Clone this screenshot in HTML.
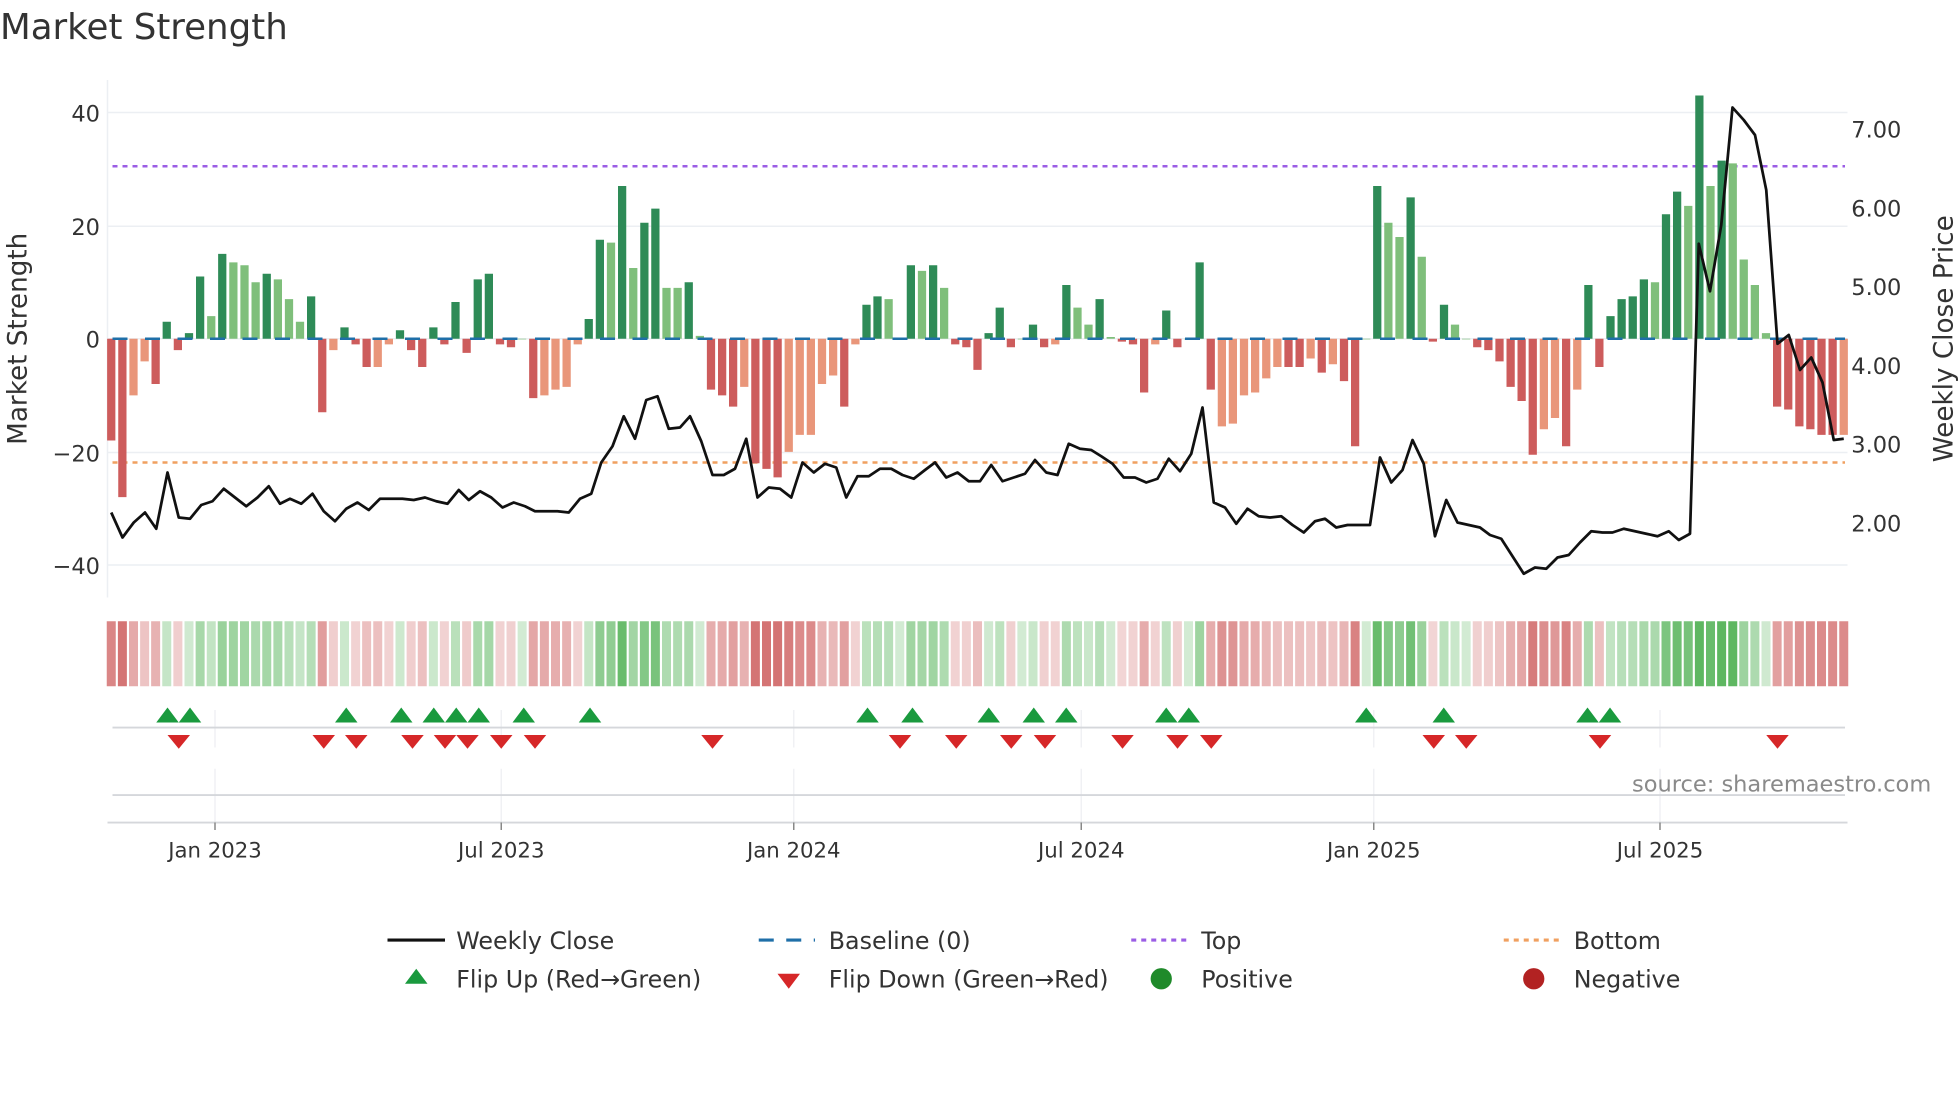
<!DOCTYPE html>
<html><head><meta charset="utf-8"><style>
html,body{margin:0;padding:0;background:#fff;}
svg{display:block;font-family:"DejaVu Sans","Liberation Sans",sans-serif;}
</style></head><body>
<svg id="s" width="1960" height="1102" viewBox="0 0 1568 881.6" xmlns="http://www.w3.org/2000/svg">
<rect width="1568" height="882" fill="#fff"/>
<text x="0" y="31" font-size="28.5" fill="#333">Market Strength</text>
<g stroke="#eceff3" stroke-width="1.2">
<line x1="86" y1="90" x2="1478" y2="90"/><line x1="86" y1="181" x2="1478" y2="181"/>
<line x1="86" y1="271" x2="1478" y2="271"/><line x1="86" y1="362" x2="1478" y2="362"/>
<line x1="86" y1="452" x2="1478" y2="452"/>
<line x1="86" y1="64" x2="86" y2="478"/>
</g>
<g font-size="18" fill="#333" text-anchor="end">
<text x="80" y="97">40</text><text x="80" y="188">20</text><text x="80" y="278">0</text><text x="80" y="369">−20</text><text x="80" y="459">−40</text>
</g>
<g font-size="18" fill="#333">
<text x="1481" y="110">7.00</text><text x="1481" y="173">6.00</text><text x="1481" y="236">5.00</text>
<text x="1481" y="299">4.00</text><text x="1481" y="362">3.00</text><text x="1481" y="425">2.00</text>
</g>
<text transform="translate(21,271) rotate(-90)" font-size="21" fill="#333" text-anchor="middle">Market Strength</text>
<text transform="translate(1562,271) rotate(-90)" font-size="21" fill="#333" text-anchor="middle">Weekly Close Price</text>
<line x1="90" y1="133" x2="1476" y2="133" stroke="#9b5de5" stroke-width="2" stroke-dasharray="4,4"/>
<line x1="90" y1="370" x2="1476" y2="370" stroke="#f0a060" stroke-width="2" stroke-dasharray="4,4"/>
<g id="bars"></g>
<line x1="90" y1="271" x2="1476" y2="271" stroke="#1f6fa8" stroke-width="2" stroke-dasharray="12,14"/>
<polyline id="pl" fill="none" stroke="#111" stroke-width="2.2" stroke-linejoin="round"/>
<g id="heat"></g>
<g stroke="#f0f1f4" stroke-width="1.2">
<line x1="172" y1="568" x2="172" y2="598"/><line x1="401" y1="568" x2="401" y2="598"/><line x1="635" y1="568" x2="635" y2="598"/>
<line x1="865" y1="568" x2="865" y2="598"/><line x1="1099" y1="568" x2="1099" y2="598"/><line x1="1328" y1="568" x2="1328" y2="598"/>
<line x1="172" y1="615" x2="172" y2="658"/><line x1="401" y1="615" x2="401" y2="658"/><line x1="635" y1="615" x2="635" y2="658"/>
<line x1="865" y1="615" x2="865" y2="658"/><line x1="1099" y1="615" x2="1099" y2="658"/><line x1="1328" y1="615" x2="1328" y2="658"/>
</g>
<line x1="90" y1="582" x2="1476" y2="582" stroke="#d5d7db" stroke-width="1.5"/>
<line x1="90" y1="636" x2="1476" y2="636" stroke="#d5d7db" stroke-width="1.5"/>
<line x1="86" y1="658" x2="1478" y2="658" stroke="#d5d7db" stroke-width="1.5"/>
<g stroke="#888" stroke-width="1.2">
<line x1="172" y1="658" x2="172" y2="664"/><line x1="401" y1="658" x2="401" y2="664"/><line x1="635" y1="658" x2="635" y2="664"/>
<line x1="865" y1="658" x2="865" y2="664"/><line x1="1099" y1="658" x2="1099" y2="664"/><line x1="1328" y1="658" x2="1328" y2="664"/>
</g>
<g id="tri"></g>
<text x="1545" y="633" font-size="18" fill="#8a8a8a" text-anchor="end">source: sharemaestro.com</text>
<g font-size="17" fill="#333" text-anchor="middle">
<text x="172" y="686">Jan 2023</text><text x="401" y="686">Jul 2023</text><text x="635" y="686">Jan 2024</text>
<text x="865" y="686">Jul 2024</text><text x="1099" y="686">Jan 2025</text><text x="1328" y="686">Jul 2025</text>
</g>
<line x1="310" y1="752" x2="356" y2="752" stroke="#111" stroke-width="2.5"/>
<line x1="607" y1="752" x2="652" y2="752" stroke="#1f6fa8" stroke-width="2.5" stroke-dasharray="12,10"/>
<line x1="905" y1="752" x2="950" y2="752" stroke="#9b5de5" stroke-width="2.5" stroke-dasharray="4,4"/>
<line x1="1203" y1="752" x2="1248" y2="752" stroke="#f0a060" stroke-width="2.5" stroke-dasharray="4,4"/>
<polygon points="324,787 342,787 333,775" fill="#1a9a3e"/>
<polygon points="622,779 640,779 631,791" fill="#d62728"/>
<circle cx="929" cy="783" r="8.5" fill="#1f8a2a"/>
<circle cx="1227" cy="783" r="8.5" fill="#b22222"/>
<g font-size="19" fill="#333">
<text x="365" y="759">Weekly Close</text><text x="663" y="759">Baseline (0)</text><text x="961" y="759">Top</text><text x="1259" y="759">Bottom</text>
<text x="365" y="790">Flip Up (Red→Green)</text><text x="663" y="790">Flip Down (Green→Red)</text><text x="961" y="790">Positive</text><text x="1259" y="790">Negative</text>
</g>
</svg>
<script>
var d="-18R -28R -10S -4S -8R 3D -2R 1D 11D 4L 15D 13.5L 13L 10L 11.5D 10.5L 7L 3L 7.5D -13R -2S 2D -1R -5R -5S -1S 1.5D -2R -5R 2D -1R 6.5D -2.5R 10.5D 11.5D -1R -1.5R 0Z -10.5R -10S -9S -8.5S -1S 3.5D 17.5D 17L 27D 12.5L 20.5D 23D 9L 9L 10D 0.5L -9R -10R -12R -8.5S -22R -23R -24.5R -20S -17S -17S -8S -6.5S -12R -1S 6D 7.5D 7L 0Z 13D 12L 13D 9L -1R -1.5R -5.5R 1D 5.5D -1.5R 0Z 2.5D -1.5R -1S 9.5D 5.5L 2.5L 7D 0.3L -0.5R -1R -9.5R -1S 5D -1.5R 0Z 13.5D -9R -15.5S -15S -10S -9.5S -7S -5S -5R -5R -3.5S -6R -4.5S -7.5R -19R 0Z 27D 20.5L 18L 25D 14.5L -0.5R 6D 2.5L 0Z -1.5R -2R -4R -8.5R -11R -20.5R -16S -14S -19R -9S 9.5D -5R 4D 7D 7.5D 10.5D 10L 22D 26D 23.5L 43D 27L 31.5D 31L 14L 9.5L 1L -12R -12.5R -15.5R -16R -17R -17R -17S".split(" ");
var col={D:"#2e8b57",L:"#7fbf7b",R:"#cd5c5c",S:"#e9967a",Z:"#7fbf7b"};
var b="",h="";var n=d.length;var step=(1475-89)/(n-1);
for(var i=0;i<n;i++){var v=parseFloat(d[i]),c=d[i].slice(-1);var x=89+i*step;
var y0=271,y1=271-v*4.525;
b+='<rect x="'+(x-3.3).toFixed(1)+'" y="'+Math.min(y0,y1).toFixed(1)+'" width="6.6" height="'+Math.max(Math.abs(y1-y0),0.5).toFixed(1)+'" fill="'+col[c]+'"/>';
var a=v>=0?0.25+0.65*Math.min(v/30,1):0.25+0.6*Math.min(-v/22,1);
var hc=v>=0?"76,175,80":"205,92,92";
h+='<rect x="'+(x-3.6).toFixed(1)+'" y="497" width="7.2" height="52" fill="rgba('+hc+','+a.toFixed(2)+')"/>';}
document.getElementById("bars").innerHTML=b;document.getElementById("heat").innerHTML=h;
var p=[89,410,98,430,107,418,116,410,125,423,134,378,143,414,152,415,161,404,170,401,179,391,188,398,197,405,206,398,215,389,224,403,232,399,241,403,250,395,259,409,268,417,277,407,286,402,295,408,304,399,313,399,322,399,331,400,340,398,349,401,358,403,367,392,375,400,384,393,393,398,402,406,411,402,420,405,428,409,437,409,446,409,455,410,464,399,473,395,481,370,490,357,499,333,508,351,517,320,526,317,535,343,544,342,552,333,561,353,570,380,579,380,588,375,597,351,606,398,615,390,624,391,633,398,642,370,651,378,660,371,669,374,677,398,686,381,695,381,704,375,713,375,722,380,731,383,740,376,748,370,757,382,766,378,775,385,784,385,793,372,802,385,811,382,820,379,828,368,837,378,846,380,855,355,864,359,873,360,881,365,890,371,899,382,908,382,917,386,926,383,935,367,944,377,953,363,962,326,971,402,980,406,989,419,998,407,1007,413,1016,414,1025,413,1034,420,1043,426,1052,417,1060,415,1069,422,1078,420,1087,420,1096,420,1104,366,1113,386,1122,376,1130,352,1139,371,1148,429,1157,400,1166,418,1175,420,1184,422,1192,428,1201,431,1210,445,1219,459,1228,454,1237,455,1246,446,1255,444,1264,434,1273,425,1282,426,1290,426,1299,423,1308,425,1317,427,1326,429,1335,425,1343,432,1352,427,1359,195,1368,233,1377,180,1386,86,1395,96,1404,108,1413,152,1422,275,1431,268,1440,296,1449,286,1458,306,1467,352,1475,351];
var s="";for(var k=0;k<p.length;k+=2)s+=p[k]+","+p[k+1]+" ";document.getElementById("pl").setAttribute("points",s);
var up=[134,152,277,321,347,365,383,419,472,694,730,791,827,853,933,951,1093,1155,1270,1288];
var dn=[143,259,285,330,356,374,401,428,570,720,765,809,836,898,942,969,1147,1173,1280,1422];
var t="";up.forEach(function(x){t+='<polygon points="'+(x-9)+',578 '+(x+9)+',578 '+x+',566" fill="#1a9a3e"/>';});
dn.forEach(function(x){t+='<polygon points="'+(x-9)+',588 '+(x+9)+',588 '+x+',599" fill="#d62728"/>';});
document.getElementById("tri").innerHTML=t;
</script>
</body></html>
